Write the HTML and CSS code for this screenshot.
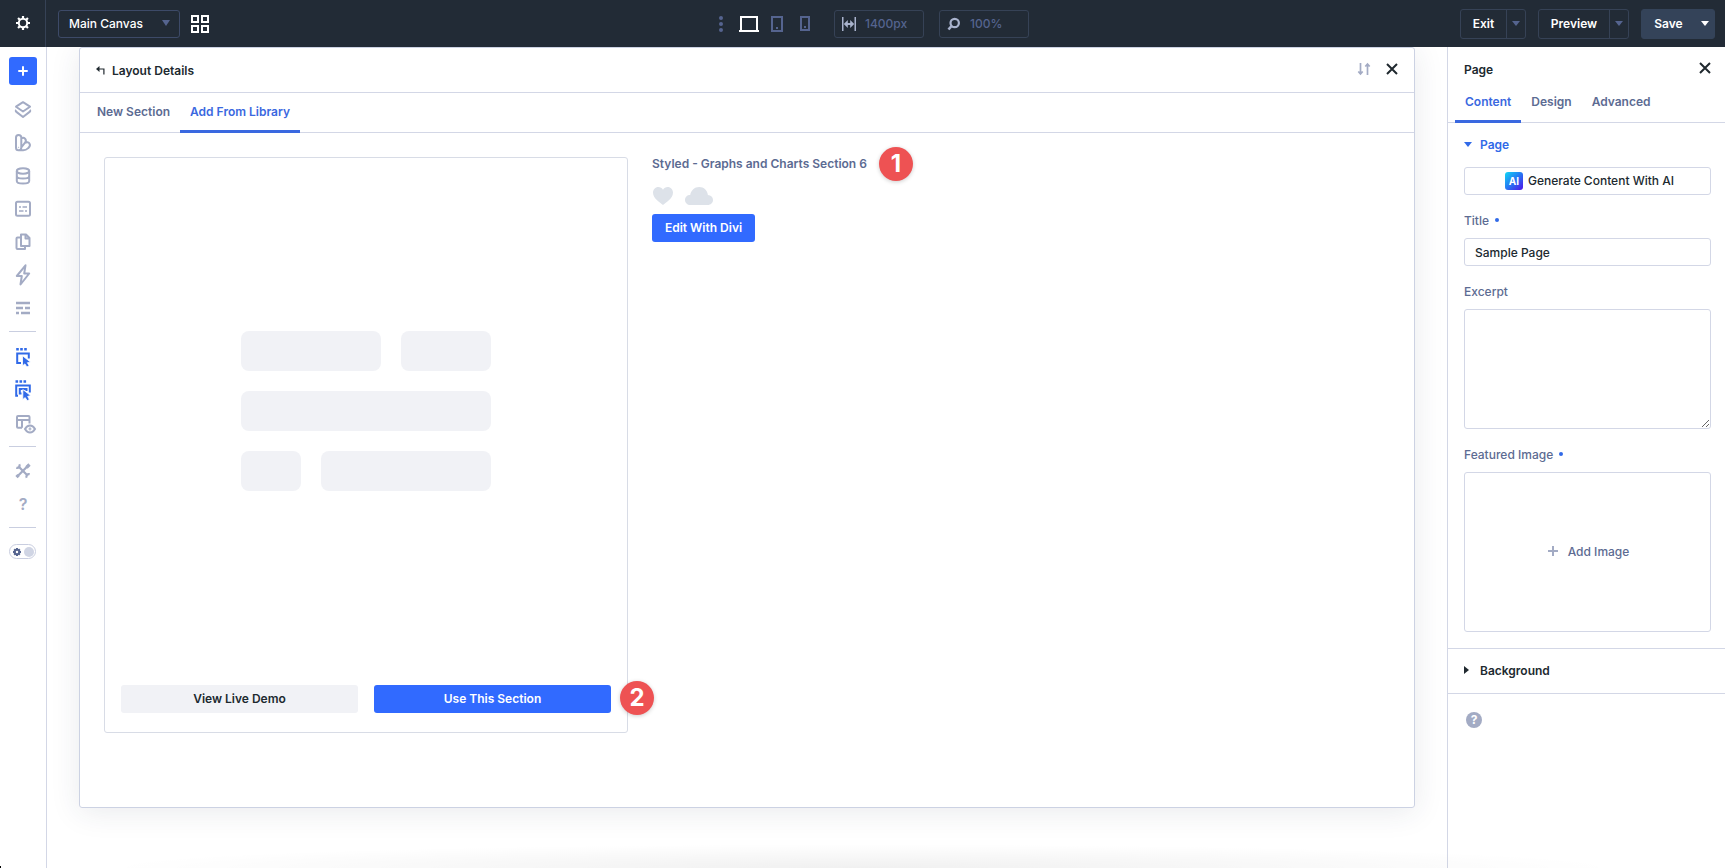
FILE: index.html
```html
<!DOCTYPE html>
<html lang="en">
<head>
    <meta charset="UTF-8">
    <meta name="viewport" content="width=device-width, initial-scale=1.0">
    <title>Sample Page - Divi Builder</title>
    <link rel="stylesheet" href="styles.css">
</head>
<body>
    <!-- Top bar -->
    <header class="topbar">
        <div class="topbar-settings">
            <svg width="16" height="16" viewBox="0 0 16 16" fill="none" stroke="#fff">
                <circle cx="8" cy="8" r="4.200" stroke-width="2"/>
                <path d="M8 1v2.500M8 12.500V15M1 8h2.500M12.500 8H15M3.050 3.050l1.700 1.700M11.250 11.250l1.700 1.700M3.050 12.950l1.700-1.700M11.250 4.750l1.700-1.700" stroke-width="2.200"/>
            </svg>
        </div>
        <div class="topbar-left">
            <div class="canvas-select"><span>Main Canvas</span><i class="caret"></i></div>
            <svg width="18" height="18" viewBox="0 0 18 18" fill="none" stroke="#fff" stroke-width="2">
                <path d="M1 1h6v6H1zM11 1h6v6h-6zM1 11h6v6H1zM11 11h6v6h-6z"/>
            </svg>
        </div>
        <div class="topbar-center">
            <svg class="dots" width="4" height="16" viewBox="0 0 4 16" fill="#55648f">
                <circle cx="2" cy="2" r="2"/><circle cx="2" cy="8" r="2"/><circle cx="2" cy="14" r="2"/>
            </svg>
            <svg class="device-desktop" width="20" height="16" viewBox="0 0 20 16" fill="none" stroke="#fff">
                <path d="M2 14V1h16v13" stroke-width="2"/><path d="M0 15h20" stroke-width="2"/>
            </svg>
            <svg class="device-tablet" width="12" height="16" viewBox="0 0 12 16" fill="none" stroke="#55648f">
                <rect x="1" y="1" width="10" height="14" stroke-width="2"/><path d="M5 12h2" stroke-width="2"/>
            </svg>
            <svg class="device-phone" width="10" height="15" viewBox="0 0 10 15" fill="none" stroke="#55648f">
                <rect x="1" y="1" width="8" height="13" stroke-width="2"/><path d="M4 11h2" stroke-width="2"/>
            </svg>
            <div class="size-field">
                <svg width="14" height="14" viewBox="0 0 14 14" stroke="#a9b3cd" fill="#a9b3cd">
                    <path d="M.75 0v14M13.250 0v14" stroke-width="1.500"/><path d="M4 7h6" stroke-width="2"/>
                    <path d="M1.800 7l4-4v8zM12.200 7l-4-4v8z" stroke="none"/>
                </svg>
                <span>1400px</span>
            </div>
            <div class="size-field">
                <svg width="14" height="14" viewBox="0 0 14 14" stroke="#a9b3cd" fill="none">
                    <circle cx="7.700" cy="6" r="4.200" stroke-width="2.200"/><path d="M4.500 9l-3 3.500" stroke-width="2.600"/>
                </svg>
                <span>100%</span>
            </div>
        </div>
        <div class="topbar-actions">
            <div class="split-button split-exit"><span>Exit</span><b><i class="caret caret-small"></i></b></div>
            <div class="split-button split-preview"><span>Preview</span><b><i class="caret caret-small"></i></b></div>
            <div class="split-button split-save"><span>Save</span><b><i class="caret caret-small"></i></b></div>
        </div>
    </header>

    <div class="workspace">
        <!-- Left icon rail -->
        <nav class="rail">
            <div class="rail-add">
                <svg width="10" height="10" viewBox="0 0 10 10" stroke="#fff" stroke-width="2" stroke-linecap="round"><path d="M5 1v8M1 5h8"/></svg>
            </div>
            <div class="rail-group">
                <svg viewBox="0 0 20 20"><path d="M10 2.200l7 4.500-7 4.800-7-4.800zM3.200 10c-.6.700-.5 1.400.2 1.900L10 17l6.600-5.100c.7-.5.800-1.200.2-1.900"/></svg>
                <svg viewBox="0 0 20 20"><path d="M5.500 2C3.800 2 3 3 3 4.500v10.300C3 16.300 4.200 17.300 5.500 17.300S8.300 16.300 8.300 14.800V4.500C8.300 3 7.300 2 5.500 2zM8.300 5.500c1.200-1 2.600-1 3.600 0 1.300 1.200 1.200 2.500.3 3.800L8.300 14.500M11.800 10c2-1.300 4-.8 4.800.8.900 1.700.2 3-1.400 4.300-1.400 1.400-3 2.200-5 2.200H5.500"/><circle cx="5.600" cy="14.300" r=".2" stroke-width="1"/></svg>
                <svg viewBox="0 0 20 20"><ellipse cx="10" cy="5" rx="6.200" ry="2.700"/><path d="M3.800 5v10c0 1.500 2.800 2.500 6.200 2.500s6.200-1 6.200-2.500V5M3.800 10c0 1.500 2.800 2.500 6.200 2.500s6.200-1 6.200-2.500"/></svg>
                <svg viewBox="0 0 20 20"><rect x="3" y="2.800" width="14" height="14" rx="1.500"/><path d="M6 8h2M9.500 8h4.500M6 12h4.500M12 12h2" stroke-width="1.500"/></svg>
                <svg viewBox="0 0 20 20"><path d="M8 2.500h5l3.500 3.500v8H8zM12.500 2.700v3.800h4M7.500 5.500H4.500c-.7 0-1 .3-1 1v9.500c0 .7.300 1 1 1h7.500V14.500"/></svg>
                <svg viewBox="0 0 20 20"><path d="M12.500.3L3.800 11h5L7.500 19.500 16.200 8.500h-5z"/></svg>
                <svg viewBox="0 0 20 20"><path d="M3 5h14M3 10h7M12 10h5M3 15h3M8 15h9" stroke-width="2.600"/></svg>
            </div>
            <hr>
            <div class="rail-group rail-active">
                <svg viewBox="0 0 20 20"><path d="M8 16H4.200V6.500h11.600v5"/><path d="M3.200 2.200h2.600M7.200 2.200h2.600M11.200 2.200h2.600" stroke-width="2.500"/><path class="solid" d="M9.500 8.800v10l2.400-1.900 2 3.100 2.200-1.300-1.700-3 3-.8z"/></svg>
                <svg viewBox="0 0 20 20"><path d="M5 15.800H3.200V5.500h13.600v7"/><path d="M8.500 13.500H6.800V9h6.700v2"/><path d="M2.500 1.500h2.600M6.500 1.500h2.600M10.500 1.500h2.600" stroke-width="2.500"/><path class="solid" d="M9.800 9.500v10l2.400-1.900 2 3.100 2.200-1.300-1.700-3 3-.8z"/></svg>
                <svg class="rail-eye" viewBox="0 0 20 20"><path d="M9 13.700H5c-.7 0-1-.3-1-1V3c0-.7.300-1 1-1h10.500c.7 0 1 .3 1 1v6.500M4 6h12.500M9 6v7.700"/><path d="M12 15c2.700-4.700 7.300-4.700 10 0-2.700 4.700-7.300 4.700-10 0z"/><circle cx="17" cy="15" r=".4"/></svg>
            </div>
            <hr>
            <div class="rail-group">
                <svg viewBox="0 0 20 20"><path d="M5.800 5.800l8.500 8.500" stroke-width="2.200"/><path d="M15.500 4.200L5 14.800" stroke-width="2.200"/><path d="M16.500 3.500l-3 3M5.500 14.200l-2 2" stroke-width="3.200"/><path d="M6.300 3.200c1 2-.8 4.200-3 3.500M13.700 16.800c-1-2 .8-4.200 3-3.500" stroke-width="2.200"/></svg>
                <span class="rail-help">?</span>
            </div>
            <hr>
            <div class="rail-toggle">
                <svg width="8" height="8" viewBox="0 0 8 8"><circle cx="4" cy="4" r="2.200"/><path d="M4 0v1.500M4 6.500V8M0 4h1.500M6.500 4H8M1.200 1.200l1 1M5.800 5.800l1 1M1.200 6.800l1-1M5.800 2.200l1-1"/></svg>
                <i></i>
            </div>
        </nav>

        <!-- Library window -->
        <main class="canvas">
            <section class="modal">
                <div class="modal-header">
                    <svg width="9" height="9" viewBox="0 0 9 9" fill="none" stroke="#20292f" stroke-width="1.200"><path d="M1.500 3h6.400v5.500"/><path d="M3.500 0v6L0 3z" fill="#20292f" stroke="none"/></svg>
                    <h2>Layout Details</h2>
                    <svg class="modal-sort" width="12" height="12" viewBox="0 0 12 12" fill="none" stroke="#a3abc4" stroke-width="1.700"><path d="M2.500 0v11M.3 8.500l2.200 2.500 2.200-2.500M9.500 12V1M7.300 3.500L9.500 1l2.200 2.500"/></svg>
                    <svg class="modal-close" width="12" height="12" viewBox="0 0 12 12" stroke="#20292f" stroke-width="2"><path d="M1 1l10 10M11 1L1 11"/></svg>
                </div>
                <div class="modal-tabs">
                    <span class="tab">New Section</span>
                    <span class="tab tab-active">Add From Library</span>
                </div>
                <div class="modal-body">
                    <div class="preview-card">
                        <div class="placeholder">
                            <i class="w140"></i><i class="w90"></i>
                            <i class="w250"></i>
                            <i class="w60"></i><i class="w170"></i>
                        </div>
                        <div class="preview-buttons">
                            <button class="btn btn-light">View Live Demo</button>
                            <button class="btn btn-blue">Use This Section</button>
                        </div>
                        <span class="step step-two">2</span>
                    </div>
                    <div class="layout-info">
                        <h3>Styled - Graphs and Charts Section 6<span class="step step-one">1</span></h3>
                        <div class="layout-icons">
                            <svg width="20" height="18" viewBox="0 0 20 18"><path d="M10 18C7 15.500 0 11.500 0 5.500 0 2.500 2.300 0 5.300 0 7.300 0 9 1 10 2.700 11 1 12.700 0 14.700 0 17.700 0 20 2.500 20 5.500c0 6-7 10-10 12.500z"/></svg>
                            <svg width="28" height="18" viewBox="0 0 28 18"><path d="M5.500 18C2.300 18 0 15.900 0 13s2-5 5.200-5C6 3.500 9.500 0 14.200 0c4.800 0 8.200 3.400 8.700 8 3 .1 5.100 2.200 5.100 5s-2.200 5-5.400 5z"/></svg>
                        </div>
                        <button class="btn btn-blue btn-edit">Edit With Divi</button>
                    </div>
                </div>
            </section>
        </main>

        <!-- Page settings -->
        <aside class="panel">
            <div class="panel-header">
                <span>Page</span>
                <svg width="12" height="12" viewBox="0 0 12 12" stroke="#20292f" stroke-width="2"><path d="M1 1l10 10M11 1L1 11"/></svg>
            </div>
            <div class="panel-tabs">
                <span class="tab tab-active">Content</span>
                <span class="tab">Design</span>
                <span class="tab">Advanced</span>
            </div>
            <div class="panel-content">
                <div class="group-title"><i class="caret caret-blue"></i>Page</div>
                <button class="ai-button"><span class="ai-badge">AI</span><span class="ai-text">Generate Content With AI</span></button>
                <label class="field-label">Title<i></i></label>
                <input class="field-input" type="text" value="Sample Page">
                <label class="field-label">Excerpt</label>
                <textarea class="field-textarea"></textarea>
                <label class="field-label">Featured Image<i></i></label>
                <div class="image-upload">
                    <svg width="10" height="10" viewBox="0 0 10 10" stroke="#a3abc4" stroke-width="2"><path d="M5 0v10M0 5h10"/></svg>
                    Add Image
                </div>
            </div>
            <div class="group-closed"><i></i>Background</div>
            <div class="panel-help">?</div>
        </aside>
    </div>

    <div class="bottom-shadow"></div>
    <div class="bottom-corner"></div>
</body>
</html>
```
FILE: styles.css
```css
* {
    margin: 0;
    padding: 0;
    box-sizing: border-box;
}

body {
    position: relative;
    height: 868px;
    overflow: hidden;
    font-family: Inter, "Liberation Sans", sans-serif;
    font-size: 12px;
    font-weight: 500;
    color: #20292f;
    background: #fff;
}

svg {
    display: block;
    flex: none;
    overflow: visible;
}

button {
    font: inherit;
    color: inherit;
    border: none;
}

.caret {
    border: 4.500px solid transparent;
    border-top: 6px solid #55648f;
    border-bottom: 0;
}

.caret-small {
    border-width: 4px;
    border-top-width: 5px;
    border-bottom: 0;
}

/* Top bar */
.topbar {
    display: flex;
    height: 47px;
    background: #222b36;
    color: #fff;
}

.topbar-settings {
    width: 46px;
    padding-top: 15px;
    padding-left: 15px;
    border-right: 1px solid #364256;
}

.topbar-left {
    display: flex;
    align-items: center;
    gap: 11px;
    width: 671px;
    padding-left: 12px;
}

.canvas-select {
    display: flex;
    align-items: center;
    justify-content: space-between;
    width: 122px;
    height: 28px;
    padding: 0 9px 1px 10px;
    border: 1px solid #3d4a68;
    border-radius: 3px;
}

.topbar-center {
    display: flex;
    align-items: center;
    flex: 1;
    padding-left: 2px;
}

.device-desktop {
    margin-left: 16px;
}

.device-tablet {
    margin-left: 12px;
}

.device-phone {
    margin: 0 24px 0 17px;
}

.size-field {
    display: flex;
    align-items: center;
    gap: 9px;
    width: 90px;
    height: 28px;
    margin-right: 15px;
    padding-left: 7px;
    border: 1px solid #364256;
    border-radius: 3px;
    color: #55648f;
}

.topbar-actions {
    display: flex;
    align-items: center;
    gap: 12px;
    padding-right: 10px;
}

.split-button {
    display: flex;
    height: 30px;
    border: 1px solid #364256;
    border-radius: 3px;
    font-weight: 600;
}

.split-button span,
.split-button b {
    display: flex;
    align-items: center;
    justify-content: center;
}

.split-button span {
    flex: 1;
    padding-bottom: 1px;
}

.split-button b {
    width: 19px;
    border-left: 1px solid #364256;
}

.split-exit {
    width: 66px;
}

.split-preview {
    width: 91px;
}

.split-save {
    width: 74px;
    background: #344359;
    border-color: #344359;
}

.split-save b {
    border-color: transparent;
}

.split-save .caret {
    border-top-color: #fff;
}

/* Layout */
.workspace {
    display: flex;
    height: 821px;
}

/* Left rail */
.rail {
    width: 47px;
    padding: 10px 10px 0 9px;
    border-right: 1px solid #d3d7e6;
}

.rail-add {
    display: flex;
    align-items: center;
    justify-content: center;
    width: 28px;
    height: 28px;
    margin-bottom: 8px;
    border-radius: 3px;
    background: #316aff;
}

.rail-group {
    padding-top: 6.500px;
}

.rail-group svg,
.rail-help {
    width: 20px;
    height: 20px;
    margin: 0 0 13px 4px;
    fill: none;
    stroke: #a3abc4;
    stroke-width: 2;
    stroke-linejoin: round;
}

.rail-group .solid {
    fill: #316ae8;
    stroke: #fff;
    stroke-width: .8;
}

.rail-active {
    padding-top: 7.500px;
}

.rail-active svg {
    stroke: #316ae8;
    stroke-linejoin: miter;
}

.rail-active .rail-eye {
    margin: 14px 0 11.500px 4px;
    stroke: #a3abc4;
}

.rail hr {
    width: 27px;
    margin: 1px 0 8px;
    border: 0;
    border-top: 1px solid #c9cee0;
}

.rail-help {
    display: block;
    color: #a3abc4;
    font-size: 16px;
    font-weight: 600;
    line-height: 20px;
    text-align: center;
}

.rail-toggle {
    display: flex;
    align-items: center;
    justify-content: space-between;
    width: 27px;
    height: 15px;
    margin-top: 16px;
    padding: 0 1px 0 3px;
    border: 1px solid #c9cee0;
    border-radius: 8px;
}

.rail-toggle svg {
    fill: none;
    stroke: #55648f;
    stroke-width: 2;
}

.rail-toggle i {
    width: 10px;
    height: 10px;
    border-radius: 50%;
    background: #d0d5e4;
}

/* Library window */
.canvas {
    flex: 1;
    overflow: hidden;
    padding: 0 32px;
}

.modal {
    height: 761px;
    border: 1px solid #ccd2e3;
    border-radius: 3px;
    box-shadow: 0 4px 30px rgba(43, 50, 75, .1);
}

.modal-header {
    display: flex;
    align-items: center;
    height: 45px;
    padding: 0 16px;
    border-bottom: 1px solid #d3d7e6;
}

.modal-header h2 {
    flex: 1;
    margin: 1px 0 0 7px;
    font-size: 12px;
    font-weight: 600;
}

.modal-sort {
    margin: 0 16px 2px 0;
}

.modal-close {
    margin-bottom: 2px;
}

.tab {
    display: flex;
    justify-content: center;
    border-bottom: 3px solid transparent;
    color: #5c6b92;
    font-weight: 600;
}

.tab-active {
    border-color: #3a68e0;
    color: #3a68e0;
}

.modal-tabs {
    display: flex;
    height: 40px;
    border-bottom: 1px solid #d3d7e6;
}

.modal-tabs .tab {
    height: 40px;
    padding: 11px 10px 0;
}

.modal-tabs .tab:first-child {
    padding-left: 17px;
}

.modal-body {
    display: flex;
    gap: 24px;
    padding: 24px;
}

.preview-card {
    position: relative;
    display: flex;
    flex-direction: column;
    width: 524px;
    height: 576px;
    padding: 173px 16px 19px;
    border: 1px solid #d8dce6;
    border-radius: 3px;
}

.placeholder {
    display: flex;
    flex-wrap: wrap;
    gap: 20px;
    width: 250px;
    margin: 0 auto;
}

.placeholder i {
    height: 40px;
    border-radius: 8px;
    background: #f1f2f6;
}

.w60 { width: 60px; }
.w90 { width: 90px; }
.w140 { width: 140px; }
.w170 { width: 170px; }
.w250 { width: 250px; }

.preview-buttons {
    display: flex;
    gap: 16px;
    margin-top: auto;
}

.btn {
    flex: 1;
    height: 28px;
    padding-bottom: 1px;
    border-radius: 3px;
    font-weight: 600;
}

.btn-light {
    background: #f1f2f6;
}

.btn-blue {
    background: #316aff;
    color: #fff;
}

.layout-info h3 {
    position: relative;
    line-height: 14px;
    font-size: 12px;
    font-weight: 600;
    color: #5c6b92;
}

.layout-icons {
    display: flex;
    gap: 12px;
    padding: 16px 0 9px 1px;
    fill: #dde2e9;
}

.btn-edit {
    width: 103px;
}

/* Numbered callouts */
.step {
    position: absolute;
    width: 34px;
    height: 34px;
    border-radius: 50%;
    background: #ee5253;
    box-shadow: 0 1px 4px rgba(0, 0, 0, .2);
    color: #fff;
    font-size: 24px;
    font-weight: 700;
    line-height: 33px;
    text-align: center;
}

.step-one {
    top: -10px;
    left: 227px;
}

.step-two {
    right: -27px;
    bottom: 17px;
}

/* Page settings panel */
.panel {
    width: 278px;
    border-left: 1px solid #d3d7e6;
    background: #fff;
}

.panel-header {
    display: flex;
    align-items: center;
    justify-content: space-between;
    height: 45px;
    padding: 0 14px 0 16px;
    font-weight: 600;
}

.panel-header svg {
    margin-bottom: 4px;
}

.panel-tabs {
    display: flex;
    height: 31px;
    padding-left: 7px;
    border-bottom: 1px solid #d3d7e6;
}

.panel-tabs .tab {
    height: 31px;
    padding: 2px 10px 0;
}

.panel-content {
    padding: 13px 14px 16px 16px;
    border-bottom: 1px solid #d3d7e6;
}

.group-title {
    display: flex;
    align-items: center;
    gap: 8px;
    height: 16px;
    margin-bottom: 15px;
    color: #316ae8;
    font-weight: 600;
}

.caret-blue {
    border-width: 4px;
    border-top: 5px solid #316ae8;
    border-bottom: 0;
}

.ai-button {
    display: flex;
    align-items: center;
    justify-content: center;
    gap: 5px;
    width: 100%;
    height: 28px;
    padding-left: 4px;
    border: 1px solid #d3d7e6;
    border-radius: 3px;
    background: #fff;
}

.ai-text {
    padding-bottom: 1px;
}

.ai-badge {
    width: 18px;
    height: 18px;
    border-radius: 3px;
    background: linear-gradient(135deg, #10d8f5 0%, #2676f3 50%, #5012e8 100%);
    color: #fff;
    font-size: 10px;
    font-weight: 700;
    line-height: 18px;
    text-align: center;
}

.field-label {
    display: flex;
    align-items: center;
    gap: 6px;
    height: 43px;
    padding-top: 7px;
    color: #5c6b92;
}

.field-label i {
    width: 4px;
    height: 4px;
    border-radius: 50%;
    background: #316ae8;
}

.field-input,
.field-textarea {
    display: block;
    width: 100%;
    height: 28px;
    padding: 0 10px;
    border: 1px solid #d3d7e6;
    border-radius: 3px;
    font: inherit;
    color: inherit;
}

.field-textarea {
    height: 120px;
}

.image-upload {
    display: flex;
    align-items: center;
    justify-content: center;
    gap: 10px;
    height: 160px;
    padding: 0 0 2px 2px;
    border: 1px solid #d3d7e6;
    border-radius: 3px;
    color: #5c6b92;
}

.group-closed {
    display: flex;
    align-items: center;
    gap: 11px;
    height: 45px;
    padding: 0 0 2px 16px;
    border-bottom: 1px solid #d3d7e6;
    font-weight: 600;
}

.group-closed i {
    border: 4px solid transparent;
    border-left: 5px solid #20292f;
    border-right: 0;
}

.panel-help {
    width: 16px;
    height: 16px;
    margin: 18px;
    border-radius: 50%;
    background: #a3abc4;
    color: #fff;
    font-weight: 700;
    line-height: 16px;
    text-align: center;
}

/* Soft edge along the bottom of the window */
.bottom-shadow {
    position: absolute;
    bottom: 0;
    left: 100px;
    right: 100px;
    height: 24px;
    background: radial-gradient(ellipse 50% 100% at 50% 100%, rgba(0, 0, 0, .06), transparent);
}

.bottom-corner {
    position: absolute;
    left: 0;
    bottom: 0;
    width: 1px;
    height: 2px;
    background: #000;
}
```
